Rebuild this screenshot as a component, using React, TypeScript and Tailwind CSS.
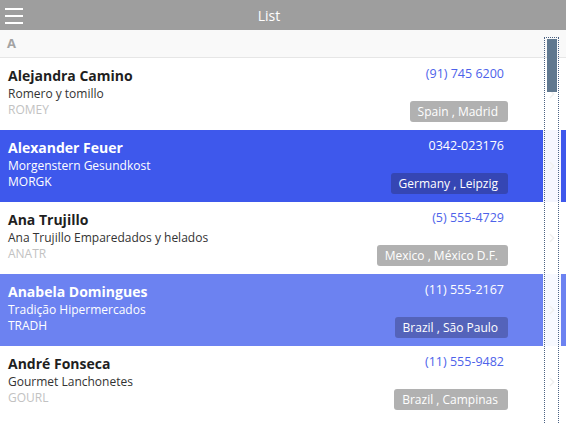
import { ChevronRight } from 'lucide-react';

type Contact = {
  name: string;
  company: string;
  code: string;
  phone: string;
  place: string;
  state?: 'selected' | 'hover';
};

const contacts: Contact[] = [
  { name: 'Alejandra Camino', company: 'Romero y tomillo', code: 'ROMEY', phone: '(91) 745 6200', place: 'Spain , Madrid' },
  { name: 'Alexander Feuer', company: 'Morgenstern Gesundkost', code: 'MORGK', phone: '0342-023176', place: 'Germany , Leipzig', state: 'selected' },
  { name: 'Ana Trujillo', company: 'Ana Trujillo Emparedados y helados', code: 'ANATR', phone: '(5) 555-4729', place: 'Mexico , México D.F.' },
  { name: 'Anabela Domingues', company: 'Tradição Hipermercados', code: 'TRADH', phone: '(11) 555-2167', place: 'Brazil , São Paulo', state: 'hover' },
  { name: 'André Fonseca', company: 'Gourmet Lanchonetes', code: 'GOURL', phone: '(11) 555-9482', place: 'Brazil , Campinas' },
];

function Row({ c }: { c: Contact }) {
  const bg = c.state === 'selected' ? 'bg-[#3e58ec]' : c.state === 'hover' ? 'bg-[#6c82f1]' : 'bg-white';
  const light = !c.state;
  const badge = c.state === 'selected' ? 'bg-[#3546b4]' : c.state === 'hover' ? 'bg-[#5463ba]' : 'bg-[#b1b1b1]';

  return (
    <div className={`flex h-[72px] ${bg}`}>
      <div className="flex flex-1 justify-between pl-2 pr-[35px]">
        <div className="flex flex-col pt-[9px]">
          <div className={`text-[14px] font-bold leading-[18px] ${light ? 'text-[#1f1f1f]' : 'text-white'}`}>{c.name}</div>
          <div className={`text-[12px] leading-[17px] ${light ? 'text-[#333]' : 'text-white'}`}>{c.company}</div>
          <div className={`text-[12px] leading-[16px] ${light ? 'text-[#c2c2c2]' : 'text-white'}`}>{c.code}</div>
        </div>
        <div className="flex flex-col items-end pt-[7px]">
          <div className={`mr-[4px] text-[12.5px] leading-[18px] ${light ? 'text-[#4d62ea]' : 'text-white'}`}>{c.phone}</div>
          <div className={`mt-[18px] rounded-[3px] ${badge} pl-2 pr-[10px] text-[12px] leading-[21px] text-white`}>
            {c.place}
          </div>
        </div>
      </div>
      <div className="flex w-[18px] items-center justify-center bg-white/95">
        <ChevronRight size={14} strokeWidth={2.5} className="text-[#f0f0f0]" />
      </div>
      <div className="w-[5px]" />
    </div>
  );
}

export default function App() {
  return (
    <div
      className="relative h-[424px] w-[566px] overflow-hidden bg-white"
      style={{ fontFamily: '"Open Sans", "Noto Sans", sans-serif' }}
    >
      <header className="relative flex h-[30px] items-center bg-[#9e9e9e]">
        <div className="absolute left-[5px] top-[8px] flex w-[18px] flex-col gap-[5px]">
          <span className="h-[2px] bg-white" />
          <span className="h-[2px] bg-white" />
          <span className="h-[2px] bg-white" />
        </div>
        <div className="flex flex-1 justify-center pr-[28px] text-[14px] text-white">List</div>
      </header>
      <div className="flex h-[28px] items-center border-b border-[#e6e6e6] bg-[#f9f9f9] pl-[7px] text-[13px] font-bold text-[#a3a3a3]">
        A
      </div>
      {contacts.map((c) => (
        <Row key={c.code} c={c} />
      ))}
      <div className="absolute left-[544px] top-[37px] h-[400px] w-[15px] border border-dotted border-[#4b6283]">
        <div className="ml-[2px] mt-[1px] h-[53px] w-[10px] bg-[#60788f]" />
      </div>
    </div>
  );
}
